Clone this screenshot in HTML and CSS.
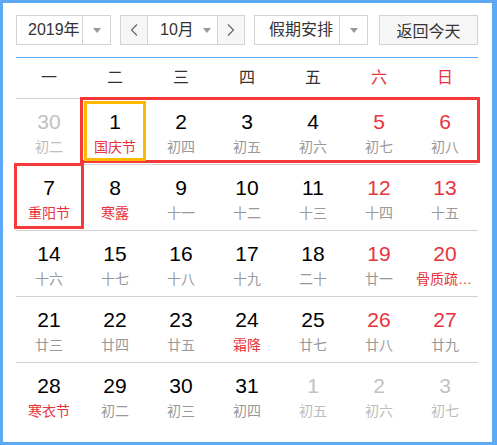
FILE: index.html
```html
<!DOCTYPE html>
<html lang="zh-CN">
<head>
    <meta charset="UTF-8">
    <meta name="viewport" content="width=device-width, initial-scale=1.0">
    <title>万年历</title>
    <link rel="stylesheet" href="styles.css">
</head>
<body>
    <div class="calendar">
        <div class="toolbar">
            <div class="select year">
                <span class="value">2019年</span>
                <span class="arrow"><i class="caret"></i></span>
            </div>
            <div class="select month">
                <span class="step">
                    <svg width="8" height="12" viewBox="0 0 8 12"><polyline points="7,0.5 1.5,6 7,11.5" fill="none" stroke="#666" stroke-width="1.2"/></svg>
                </span>
                <span class="value">10月<i class="caret"></i></span>
                <span class="step">
                    <svg width="8" height="12" viewBox="0 0 8 12"><polyline points="1,0.5 6.5,6 1,11.5" fill="none" stroke="#666" stroke-width="1.2"/></svg>
                </span>
            </div>
            <div class="select holiday">
                <span class="value">假期安排</span>
                <span class="arrow"><i class="caret"></i></span>
            </div>
            <button class="today-btn">返回今天</button>
        </div>

        <div class="weekdays">
            <span>一</span><span>二</span><span>三</span><span>四</span><span>五</span>
            <span class="weekend">六</span><span class="weekend">日</span>
        </div>

        <div class="days">
            <!-- row 1 -->
            <div class="day other"><span class="num">30</span><span class="lunar">初二</span></div>
            <div class="day range range-start today"><span class="num">1</span><span class="lunar fest">国庆节</span></div>
            <div class="day range"><span class="num">2</span><span class="lunar">初四</span></div>
            <div class="day range"><span class="num">3</span><span class="lunar">初五</span></div>
            <div class="day range"><span class="num">4</span><span class="lunar">初六</span></div>
            <div class="day range weekend"><span class="num">5</span><span class="lunar">初七</span></div>
            <div class="day range range-end weekend"><span class="num">6</span><span class="lunar">初八</span></div>
            <!-- row 2 -->
            <div class="day range range-start range-end"><span class="num">7</span><span class="lunar fest">重阳节</span></div>
            <div class="day"><span class="num">8</span><span class="lunar fest">寒露</span></div>
            <div class="day"><span class="num">9</span><span class="lunar">十一</span></div>
            <div class="day"><span class="num">10</span><span class="lunar">十二</span></div>
            <div class="day"><span class="num">11</span><span class="lunar">十三</span></div>
            <div class="day weekend"><span class="num">12</span><span class="lunar">十四</span></div>
            <div class="day weekend"><span class="num">13</span><span class="lunar">十五</span></div>
            <!-- row 3 -->
            <div class="day"><span class="num">14</span><span class="lunar">十六</span></div>
            <div class="day"><span class="num">15</span><span class="lunar">十七</span></div>
            <div class="day"><span class="num">16</span><span class="lunar">十八</span></div>
            <div class="day"><span class="num">17</span><span class="lunar">十九</span></div>
            <div class="day"><span class="num">18</span><span class="lunar">二十</span></div>
            <div class="day weekend"><span class="num">19</span><span class="lunar">廿一</span></div>
            <div class="day weekend"><span class="num">20</span><span class="lunar fest">骨质疏松日</span></div>
            <!-- row 4 -->
            <div class="day"><span class="num">21</span><span class="lunar">廿三</span></div>
            <div class="day"><span class="num">22</span><span class="lunar">廿四</span></div>
            <div class="day"><span class="num">23</span><span class="lunar">廿五</span></div>
            <div class="day"><span class="num">24</span><span class="lunar fest">霜降</span></div>
            <div class="day"><span class="num">25</span><span class="lunar">廿七</span></div>
            <div class="day weekend"><span class="num">26</span><span class="lunar">廿八</span></div>
            <div class="day weekend"><span class="num">27</span><span class="lunar">廿九</span></div>
            <!-- row 5 -->
            <div class="day"><span class="num">28</span><span class="lunar fest">寒衣节</span></div>
            <div class="day"><span class="num">29</span><span class="lunar">初二</span></div>
            <div class="day"><span class="num">30</span><span class="lunar">初三</span></div>
            <div class="day"><span class="num">31</span><span class="lunar">初四</span></div>
            <div class="day other"><span class="num">1</span><span class="lunar">初五</span></div>
            <div class="day other"><span class="num">2</span><span class="lunar">初六</span></div>
            <div class="day other"><span class="num">3</span><span class="lunar">初七</span></div>
        </div>
    </div>
</body>
</html>
```

FILE: styles.css
```css
body {
    margin: 0;
    background: #fff;
    font-family: "Liberation Sans", "Noto Sans CJK SC", sans-serif;
    color: #333;
}
.calendar {
    width: 497px;
    height: 445px;
    box-sizing: border-box;
    border: 3px solid #5ea9f5;
    border-right-width: 5px;
    padding: 12px 14px 0 13px;
}

/* toolbar */
.toolbar {
    display: flex;
    gap: 9px;
    height: 30px;
}
.select {
    display: flex;
    height: 30px;
    box-sizing: border-box;
    border: 1px solid #d3d3d3;
    font-size: 16px;
    line-height: 28px;
    white-space: nowrap;
}
.select .value {
    display: flex;
    align-items: center;
    box-sizing: border-box;
    padding-left: 11px;
}
.select .arrow {
    display: flex;
    align-items: center;
    justify-content: center;
    width: 28px;
    box-sizing: border-box;
    border-left: 1px solid #d3d3d3;
}
.caret {
    display: inline-block;
    width: 0;
    height: 0;
    border-left: 4px solid transparent;
    border-right: 4px solid transparent;
    border-top: 5px solid #999;
}
.year .value { width: 65px; }
.holiday .value { width: 84px; padding-left: 14px; }
.month .step {
    display: flex;
    align-items: center;
    justify-content: center;
    width: 26px;
    background: #f6f6f6;
}
.month .value {
    width: 71px;
    padding-left: 12px;
    border-left: 1px solid #d3d3d3;
    border-right: 1px solid #d3d3d3;
}
.month .caret {
    margin-left: 9px;
}
.today-btn {
    margin-left: auto;
    width: 99px;
    height: 30px;
    border: 1px solid #d3d3d3;
    background: #f6f6f6;
    color: #333;
    font-family: inherit;
    font-size: 16px;
    padding: 0;
}

/* week header */
.weekdays {
    display: grid;
    grid-template-columns: repeat(7, 66px);
    margin-top: 12px;
    border-top: 1px solid #5ea9f5;
    height: 40px;
    line-height: 40px;
    text-align: center;
    font-size: 16px;
    color: #333;
}
.weekdays .weekend { color: #e8333c; }

/* days */
.days {
    display: grid;
    grid-template-columns: repeat(7, 66px);
    grid-auto-rows: 66px;
}
.day {
    position: relative;
    box-sizing: border-box;
    border-top: 1px solid #d2d2d2;
    padding-top: 11px;
    text-align: center;
}
.num {
    display: block;
    font-size: 21px;
    line-height: 24px;
    color: #000;
}
.lunar {
    display: block;
    max-width: 58px;
    margin: 4px auto 0;
    font-size: 14px;
    line-height: 18px;
    color: #999;
    white-space: nowrap;
    overflow: hidden;
    text-overflow: ellipsis;
}
.day.weekend .num { color: #e8333c; }
.lunar.fest { color: #e8333c; }
.day.other .num { color: #c2c2c2; }
.day.other .lunar { color: #bdbdbd; }

/* holiday range outline */
.range::after {
    content: "";
    position: absolute;
    top: -2px;
    bottom: 1px;
    left: 0;
    right: 0;
    border-top: 3px solid #f5393a;
    border-bottom: 3px solid #f5393a;
    z-index: 2;
}
.range-start::after {
    left: -2px;
    border-left: 3px solid #f5393a;
}
.range-end::after {
    right: -2px;
    border-right: 3px solid #f5393a;
}
.today::before {
    content: "";
    position: absolute;
    top: 2px;
    bottom: 3px;
    left: 2px;
    right: 2px;
    border: 3px solid #ffb800;
    z-index: 3;
}
```
